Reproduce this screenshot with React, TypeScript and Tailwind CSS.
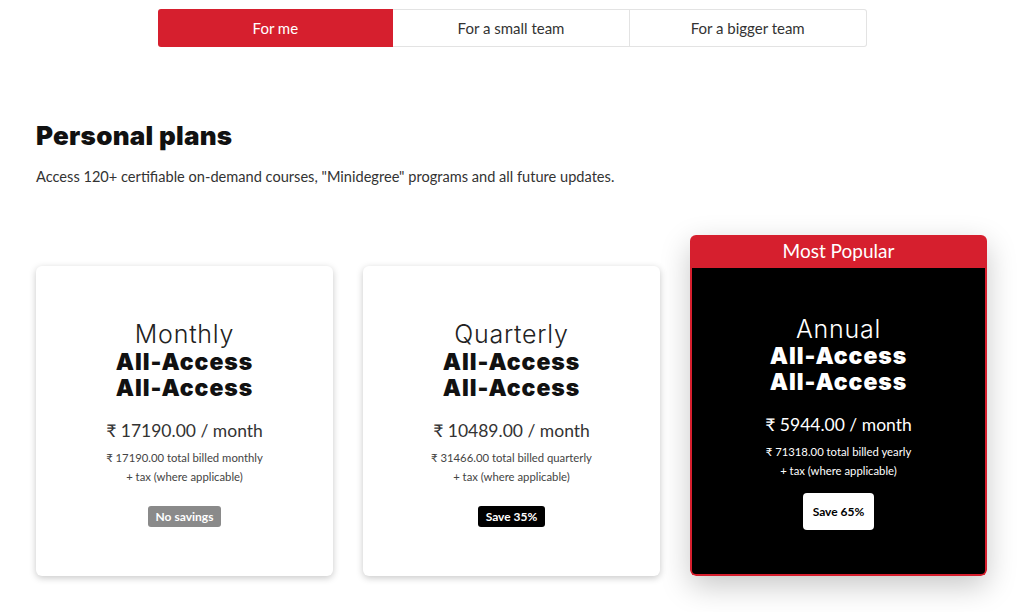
import React from "react";

const lato = { fontFamily: "Lato, 'Open Sans', sans-serif" };
const mont = { fontFamily: "Inter, 'Noto Sans', sans-serif" };

type Plan = {
  name: string;
  price: string;
  total: string;
  badge: string;
  badgeCls: string;
};

const plans: Plan[] = [
  {
    name: "Monthly",
    price: "₹ 17190.00 / month",
    total: "₹ 17190.00 total billed monthly",
    badge: "No savings",
    badgeCls: "bg-[#8a8a8a] text-white",
  },
  {
    name: "Quarterly",
    price: "₹ 10489.00 / month",
    total: "₹ 31466.00 total billed quarterly",
    badge: "Save 35%",
    badgeCls: "bg-black text-white",
  },
];

function PlanCard({ p }: { p: Plan }) {
  return (
    <div className="w-[297px] h-[310px] bg-white rounded-[6px] shadow-[0_2px_7px_rgba(0,0,0,0.22)] flex flex-col items-center pt-[54px] text-[#222]">
      <div style={mont} className="text-[25px] leading-[28px] font-light tracking-[0.03em]">
        {p.name}
      </div>
      <div style={mont} className="text-[23px] leading-[26px] font-black tracking-[0.04em] text-[#111] mt-px">
        All-Access
      </div>
      <div style={mont} className="text-[23px] leading-[26px] font-black tracking-[0.04em] text-[#111]">
        All-Access
      </div>
      <div style={lato} className="text-[17.5px] leading-[24px] text-[#333] mt-[18px]">
        {p.price}
      </div>
      <div style={lato} className="text-[11.3px] leading-[19px] text-[#444] mt-[5px] text-center">
        <div>{p.total}</div>
        <div>+ tax (where applicable)</div>
      </div>
      <div
        style={lato}
        className={`mt-[20px] h-[21px] px-[8px] rounded-[3px] text-[12px] font-bold flex items-center ${p.badgeCls}`}
      >
        {p.badge}
      </div>
    </div>
  );
}

export default function App() {
  return (
    <div className="w-[1024px] h-[612px] bg-white overflow-hidden relative" style={lato}>
      <div className="flex justify-center pt-[9px]">
        <div className="flex w-[709px] h-[38px] text-[15px]">
          <div className="flex-1 bg-[#d61f2e] text-white rounded-l-[3px] flex items-center justify-center">
            For me
          </div>
          <div className="flex-1 border border-[#e3e3e3] border-l-0 text-[#333] flex items-center justify-center">
            For a small team
          </div>
          <div className="flex-1 border border-[#e3e3e3] border-l-0 rounded-r-[3px] text-[#333] flex items-center justify-center">
            For a bigger team
          </div>
        </div>
      </div>

      <div className="pl-[36px] pt-[73px]">
        <h1 style={mont} className="text-[26px] leading-[32px] font-black text-[#111] tracking-[0.01em]">
          Personal plans
        </h1>
        <p className="text-[14.6px] leading-[24px] text-[#333] mt-[13px]">
          Access 120+ certifiable on-demand courses, "Minidegree" programs and all future updates.
        </p>

        <div className="flex items-end gap-[30px] mt-[46px]">
          {plans.map((p) => (
            <PlanCard key={p.name} p={p} />
          ))}
          <div className="w-[297px] rounded-[6px] shadow-[0_10px_30px_rgba(0,0,0,0.22)] flex flex-col overflow-hidden">
            <div className="h-[33px] bg-[#d61f2e] text-white text-[19px] flex items-center justify-center">
              Most Popular
            </div>
            <div className="h-[308px] bg-black border-2 border-t-0 border-[#d61f2e] rounded-b-[6px] flex flex-col items-center pt-[47px] text-white">
              <div style={mont} className="text-[25px] leading-[28px] font-light tracking-[0.03em]">
                Annual
              </div>
              <div style={mont} className="text-[23px] leading-[26px] font-black tracking-[0.04em]">
                All-Access
              </div>
              <div style={mont} className="text-[23px] leading-[26px] font-black tracking-[0.04em]">
                All-Access
              </div>
              <div className="text-[17.5px] leading-[24px] mt-[18px]">₹ 5944.00 / month</div>
              <div className="text-[11.3px] leading-[19px] mt-[5px] text-center">
                <div>₹ 71318.00 total billed yearly</div>
                <div>+ tax (where applicable)</div>
              </div>
              <div className="mt-[13px] h-[37px] w-[71px] rounded-[4px] bg-white text-black text-[12px] font-bold flex items-center justify-center">
                Save 65%
              </div>
            </div>
          </div>
        </div>
      </div>
    </div>
  );
}
